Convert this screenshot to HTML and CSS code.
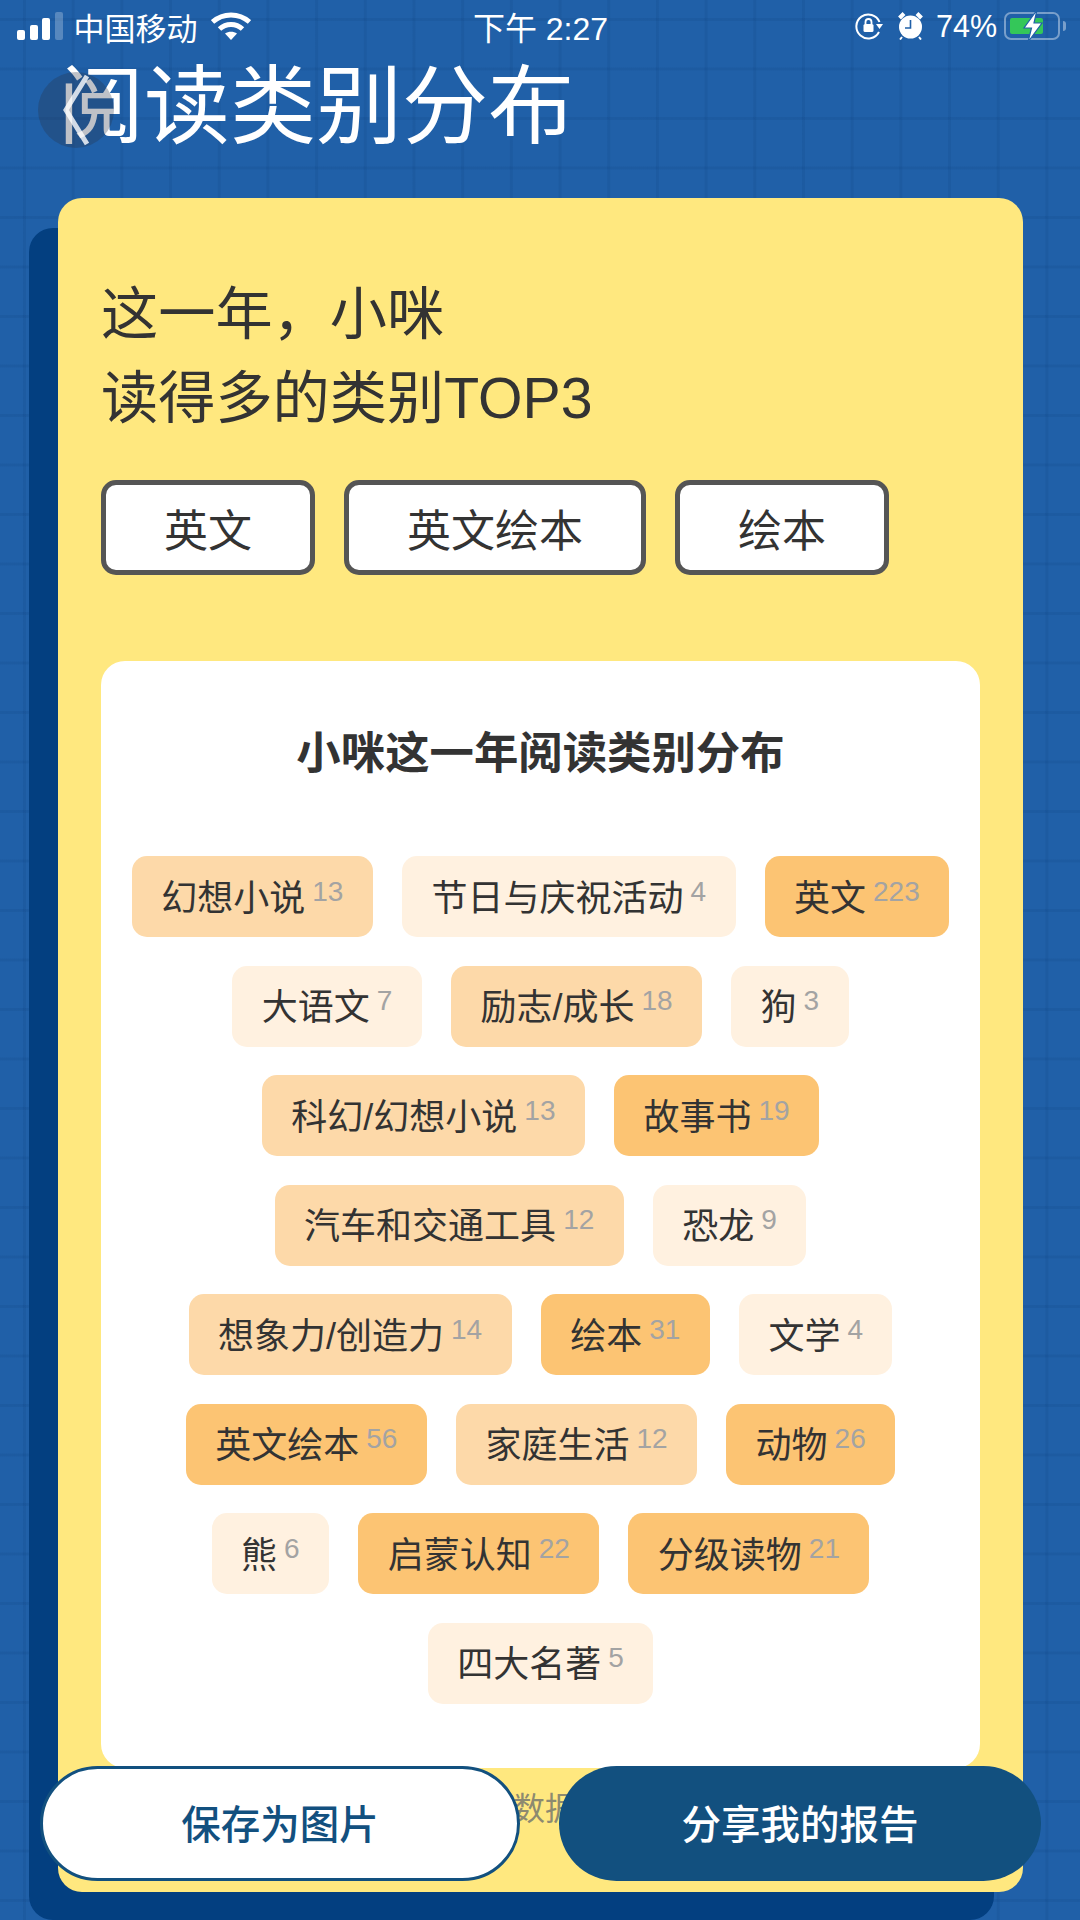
FILE: index.html
```html
<!DOCTYPE html>
<html lang="zh-CN">
<head>
    <meta charset="UTF-8">
    <meta name="viewport" content="width=device-width, initial-scale=1.0">
    <title>阅读类别分布</title>
    <link rel="stylesheet" href="styles.css">
</head>
<body>
    <div class="status-bar">
        <div class="status-left">
            <div class="signal">
                <span class="bar bar-1"></span>
                <span class="bar bar-2"></span>
                <span class="bar bar-3"></span>
                <span class="bar bar-4"></span>
            </div>
            <span class="carrier">中国移动</span>
            <svg class="wifi" width="40" height="28" viewBox="0 0 40 28">
                <path d="M1.500 10 C12 0.500 28 0.500 38.500 10" fill="none" stroke="#fff" stroke-width="5"/>
                <path d="M8.500 17 C15 11 25 11 31.500 17" fill="none" stroke="#fff" stroke-width="5"/>
                <path d="M14 21.500 C17.500 19 22.500 19 26 21.500 L20 28 Z" fill="#fff"/>
            </svg>
        </div>
        <div class="status-time">下午 2:27</div>
        <div class="status-right">
            <svg class="lock" width="28" height="28" viewBox="0 0 28 28">
                <path d="M24 20 A12 12 0 1 1 24.500 10" fill="none" stroke="#fff" stroke-width="2"/>
                <path d="M21 12 L28 12 L24.500 17 Z" fill="#fff"/>
                <rect x="8.500" y="12" width="10" height="8" rx="1.500" fill="#fff"/>
                <path d="M10.500 12 V10 A3 3 0 0 1 16.500 10 V12" fill="none" stroke="#fff" stroke-width="1.800"/>
            </svg>
            <svg class="alarm" width="25" height="28" viewBox="0 0 25 28">
                <circle cx="12.500" cy="15" r="11.500" fill="#fff"/>
                <path d="M1.500 6 L6 1.500 M23.500 6 L19 1.500" stroke="#fff" stroke-width="4"/>
                <path d="M4 25 L2 27.500 M21 25 L23 27.500" stroke="#fff" stroke-width="2"/>
                <path d="M12.500 8 V16 H7" fill="none" stroke="#2060a8" stroke-width="1.600"/>
            </svg>
            <span class="battery-text">74%</span>
            <div class="battery">
                <div class="battery-fill"></div>
                <svg class="bolt" width="24" height="34" viewBox="0 0 24 34">
                    <path d="M16 1 L3 19 H10.500 L7 33 L21 14 H13 Z" fill="#fff" stroke="#2060a8" stroke-width="1.200"/>
                </svg>
            </div>
            <span class="battery-nub"></span>
        </div>
    </div>

    <div class="page-header">
        <button class="back-btn">
            <svg width="28" height="72" viewBox="0 0 28 72">
                <path d="M25 2 L4 36 L25 70" fill="none" stroke="#fff" stroke-opacity="0.8" stroke-width="5"/>
            </svg>
        </button>
        <h1>阅读类别分布</h1>
    </div>

    <div class="card-wrap">
        <div class="card-shadow"></div>
        <div class="card">
            <h2>这一年，小咪<br>读得多的类别TOP3</h2>
            <div class="top-list">
                <span class="top-item">英文</span>
                <span class="top-item">英文绘本</span>
                <span class="top-item">绘本</span>
            </div>
            <div class="panel">
                <h3>小咪这一年阅读类别分布</h3>
                <div class="tag-list">
                    <span class="tag level-2">幻想小说<sup>13</sup></span>
                    <span class="tag level-1">节日与庆祝活动<sup>4</sup></span>
                    <span class="tag level-3">英文<sup>223</sup></span>
                    <span class="tag level-1">大语文<sup>7</sup></span>
                    <span class="tag level-2">励志/成长<sup>18</sup></span>
                    <span class="tag level-1">狗<sup>3</sup></span>
                    <span class="tag level-2">科幻/幻想小说<sup>13</sup></span>
                    <span class="tag level-3">故事书<sup>19</sup></span>
                    <span class="tag level-2">汽车和交通工具<sup>12</sup></span>
                    <span class="tag level-1">恐龙<sup>9</sup></span>
                    <span class="tag level-2">想象力/创造力<sup>14</sup></span>
                    <span class="tag level-3">绘本<sup>31</sup></span>
                    <span class="tag level-1">文学<sup>4</sup></span>
                    <span class="tag level-3">英文绘本<sup>56</sup></span>
                    <span class="tag level-2">家庭生活<sup>12</sup></span>
                    <span class="tag level-3">动物<sup>26</sup></span>
                    <span class="tag level-1">熊<sup>6</sup></span>
                    <span class="tag level-3">启蒙认知<sup>22</sup></span>
                    <span class="tag level-3">分级读物<sup>21</sup></span>
                    <span class="tag level-1">四大名著<sup>5</sup></span>
                </div>
            </div>
            <p class="note">数据</p>
        </div>
    </div>

    <div class="bottom-bar">
        <button class="btn btn-save">保存为图片</button>
        <button class="btn btn-share">分享我的报告</button>
    </div>
</body>
</html>
```

FILE: styles.css
```css
* {
    box-sizing: border-box;
}

html, body {
    margin: 0;
    height: 1920px;
}

body {
    position: relative;
    overflow: hidden;
    font-family: "Liberation Sans", "Noto Sans CJK SC", sans-serif;
    color: #333;
    background-color: #2060a8;
    background-image:
        linear-gradient(90deg, rgba(10, 60, 120, 0.14) 3px, transparent 3px),
        linear-gradient(rgba(10, 60, 120, 0.14) 3px, transparent 3px);
    background-size: 48.7px 49.5px;
    background-position: 23px 18px;
}

.status-bar {
    height: 52px;
    padding: 0 14px 0 17px;
    display: grid;
    grid-template-columns: 1fr auto 1fr;
    align-items: center;
    color: #fff;
}

.status-left, .status-right {
    display: flex;
    align-items: center;
}

.status-right {
    justify-content: flex-end;
}

.signal {
    display: flex;
    align-items: flex-end;
    gap: 4.5px;
    height: 28px;
}

.bar {
    width: 8px;
    background: #fff;
    border-radius: 2px;
}

.bar-1 { height: 10px; }
.bar-2 { height: 15px; }
.bar-3 { height: 22px; }
.bar-4 { height: 28px; opacity: 0.25; }

.carrier {
    margin-left: 11px;
    font-size: 31px;
}

.wifi {
    margin-left: 13px;
}

.status-time {
    font-size: 32px;
    margin-right: 2px;
}

.lock {
    margin-right: 15px;
}

.alarm {
    margin-right: 13px;
}

.battery-text {
    font-size: 30.5px;
    margin-right: 7px;
}

.battery {
    position: relative;
    width: 56px;
    height: 28px;
    padding: 4px;
    border: 2px solid rgba(255, 255, 255, 0.4);
    border-radius: 7px;
}

.battery-fill {
    width: 33px;
    height: 100%;
    background: #34c759;
    border-radius: 2px;
}

.bolt {
    position: absolute;
    left: 15px;
    top: -5px;
}

.battery-nub {
    width: 3px;
    height: 10px;
    margin-left: 3px;
    background: rgba(255, 255, 255, 0.4);
    border-radius: 0 3px 3px 0;
}

.page-header {
    position: relative;
    height: 146px;
    padding: 6px 0 0 58px;
}

.page-header h1 {
    margin: 0;
    font-size: 86px;
    font-weight: 400;
    line-height: 98px;
    color: #fff;
}

.back-btn {
    position: absolute;
    left: 38px;
    top: 20px;
    width: 76px;
    height: 76px;
    padding: 0 0 0 24px;
    border: none;
    border-radius: 50%;
    background: rgba(40, 50, 70, 0.3);
    display: flex;
    align-items: center;
}

.card-wrap {
    position: relative;
    margin: 0 57px 0 58px;
}

.card-shadow {
    position: absolute;
    left: -29px;
    right: 29px;
    top: 30px;
    height: 1692px;
    background: #033f80;
    border-radius: 24px;
}

.card {
    position: relative;
    height: 1694px;
    padding: 74px 43px 0;
    background: #ffe87f;
    border-radius: 24px;
}

.card h2 {
    margin: 0;
    font-size: 57.2px;
    font-weight: 400;
    line-height: 84px;
}

.top-list {
    display: flex;
    gap: 29px;
    margin-top: 40px;
}

.top-item {
    height: 95px;
    padding: 0 58px;
    display: flex;
    align-items: center;
    font-size: 44px;
    background: #fff;
    border: 5px solid #555;
    border-radius: 15px;
}

.panel {
    margin-top: 86px;
    height: 1107px;
    padding: 65px 20px 0;
    background: #fff;
    border-radius: 24px;
}

.panel h3 {
    margin: 0;
    font-size: 44.4px;
    font-weight: 700;
    line-height: 56px;
    text-align: center;
}

.tag-list {
    margin-top: 74px;
    display: flex;
    flex-wrap: wrap;
    justify-content: center;
    gap: 28.5px 29px;
}

.tag {
    height: 81px;
    padding: 0 29.500px 4px;
    display: flex;
    align-items: center;
    font-size: 36px;
    border-radius: 15px;
}

.tag sup {
    margin-left: 7px;
    margin-bottom: 6px;
    font-size: 28px;
    line-height: 1;
    vertical-align: baseline;
    color: #a3a3a3;
}

.level-1 { background: #fff1e0; }
.level-2 { background: #fdd9a9; }
.level-3 { background: #fcc473; }

.note {
    margin: 21px 0 0;
    padding-left: 412px;
    font-size: 32px;
    line-height: 40px;
    color: #8d8a70;
}

.bottom-bar {
    position: absolute;
    left: 40px;
    top: 1766px;
    width: 1001px;
    display: flex;
    justify-content: space-between;
}

.btn {
    height: 115px;
    padding-bottom: 6px;
    font-family: inherit;
    font-size: 39.5px;
    font-weight: 500;
    border-radius: 58px;
}

.btn-save {
    width: 480px;
    color: #12507f;
    background: #fff;
    border: 3px solid #12507f;
}

.btn-share {
    width: 482px;
    color: #fff;
    background: #12507f;
    border: none;
}
```
